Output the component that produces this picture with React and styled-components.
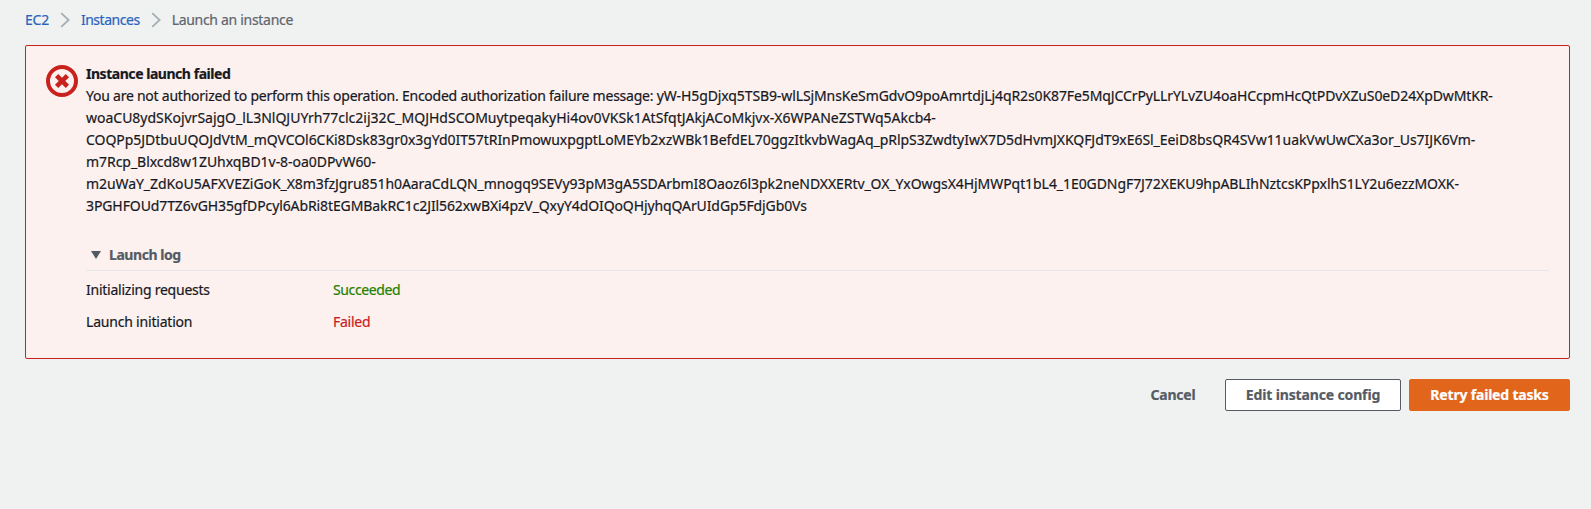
import React from "react";
import styled, { createGlobalStyle } from "styled-components";

const GlobalStyle = createGlobalStyle`
  * { box-sizing: border-box; }
  body {
    margin: 0;
    min-height: 100vh;
    background: #f0f2f2;
    color: #16191f;
    font-family: "Noto Sans", "Open Sans", sans-serif;
    font-size: 14px;
    line-height: 22px;
    white-space: nowrap;
    -webkit-text-stroke: 0.2px;
  }
`;

const Page = styled.main`
  padding: 9px 21px 0 25px;
`;

const Breadcrumbs = styled.nav`
  display: flex;
  align-items: center;
  height: 22px;
  margin-bottom: 14px;
`;

const Crumb = styled.a`
  color: ${(p) => (p.$current ? "#5f656d" : "#2a63bd")};
  letter-spacing: ${(p) => p.$tracking}px;
`;

const Chevron = styled.svg`
  flex: none;
  width: 10px;
  height: 16px;
  margin: 0 11px 0 11px;
  fill: none;
  stroke: #a3afb1;
  stroke-width: 1.8;
`;

const Alert = styled.section`
  display: flex;
  height: 314px;
  padding: 17px 20px 0;
  background: #fdf1ef;
  border: 1px solid #c9211e;
  border-radius: 2px;
`;

const ErrorIcon = styled.svg`
  flex: none;
  width: 32px;
  height: 32px;
  margin: 2px 8px 0 0;
  fill: none;
  stroke: #c9211e;
`;

const AlertBody = styled.div`
  flex: 1;
  min-width: 0;
`;

const AlertTitle = styled.h1`
  margin: 0;
  font-size: 14px;
  line-height: 22px;
  font-weight: 700;
  letter-spacing: -0.462px;
`;

const Message = styled.p`
  margin: 0;
`;

const Line = styled.span`
  display: block;
`;

const Run = styled.span`
  letter-spacing: ${(p) => p.$tracking}px;
`;

const LogHeader = styled.div`
  display: flex;
  align-items: center;
  height: 32px;
  margin-top: 22px;
  padding: 1px 0 0 5px;
  border-bottom: 1px solid #e3e9e9;
  color: #545b64;
  font-weight: 700;
  letter-spacing: -0.436px;
`;

const Caret = styled.svg`
  width: 10px;
  height: 8px;
  margin-right: 8px;
  fill: #545b64;
`;

const LogRows = styled.div`
  padding-top: 8px;
`;

const LogRow = styled.div`
  display: grid;
  grid-template-columns: 247px 1fr;
  height: 32px;
`;

const Status = styled(Run)`
  color: ${(p) => (p.$ok ? "#1d8102" : "#c9211e")};
`;

const Actions = styled.footer`
  display: flex;
  justify-content: flex-end;
  margin-top: 20px;
`;

const BUTTON_KINDS = {
  link: { bg: "transparent", border: "transparent", color: "#545b64" },
  normal: { bg: "#ffffff", border: "#545b64", color: "#545b64" },
  primary: { bg: "#e1651b", border: "#e1651b", color: "#ffffff" },
};

const Button = styled.button`
  width: ${(p) => p.$width}px;
  height: 32px;
  margin-left: 8px;
  padding: 0;
  border: 1px solid ${(p) => BUTTON_KINDS[p.$kind].border};
  border-radius: 2px;
  background: ${(p) => BUTTON_KINDS[p.$kind].bg};
  color: ${(p) => BUTTON_KINDS[p.$kind].color};
  font: 700 14px/20px "Noto Sans", "Open Sans", sans-serif;
  letter-spacing: ${(p) => p.$tracking}px;
`;

const Separator = () => (
  <Chevron viewBox="0 0 10 16" aria-hidden="true">
    <path d="M1.2 1.2 8.6 8 1.2 14.8" />
  </Chevron>
);

const MESSAGE = [
  [
    ["You are not authorized to perform this operation. Encoded authorization failure message: ", -0.24],
    ["yW-H5gDjxq5TSB9-wlLSjMnsKeSmGdvO9poAmrtdjLj4qR2s0K87Fe5MqJCCrPyLLrYLvZU4oaHCcpmHcQtPDvXZuS0eD24XpDwMtKR-", -0.105],
  ],
  [["woaCU8ydSKojvrSajgO_lL3NlQJUYrh77clc2ij32C_MQJHdSCOMuytpeqakyHi4ov0VKSk1AtSfqtJAkjACoMkjvx-X6WPANeZSTWq5Akcb4-", -0.008]],
  [["COQPp5JDtbuUQOJdVtM_mQVCOl6CKi8Dsk83gr0x3gYd0IT57tRInPmowuxpgptLoMEYb2xzWBk1BefdEL70ggzItkvbWagAq_pRlpS3ZwdtyIwX7D5dHvmJXKQFJdT9xE6Sl_EeiD8bsQR4SVw11uakVwUwCXa3or_Us7IJK6Vm-", -0.054]],
  [["m7Rcp_Blxcd8w1ZUhxqBD1v-8-oa0DPvW60-", -0.042]],
  [["m2uWaY_ZdKoU5AFXVEZiGoK_X8m3fzJgru851h0AaraCdLQN_mnogq9SEVy93pM3gA5SDArbmI8Oaoz6l3pk2neNDXXERtv_OX_YxOwgsX4HjMWPqt1bL4_1E0GDNgF7J72XEKU9hpABLIhNztcsKPpxlhS1LY2u6ezzMOXK-", -0.066]],
  [["3PGHFOUd7TZ6vGH35gfDPcyl6AbRi8tEGMBakRC1c2JIl562xwBXi4pzV_QxyY4dOIQoQHjyhqQArUIdGp5FdjGb0Vs", -0.103]],
];

const LOG = [
  { step: "Initializing requests", stepTracking: -0.242, status: "Succeeded", statusTracking: -0.376, ok: true },
  { step: "Launch initiation", stepTracking: -0.2, status: "Failed", statusTracking: -0.26, ok: false },
];

export default function App() {
  return (
    <>
      <GlobalStyle />
      <Page>
        <Breadcrumbs>
          <Crumb $tracking={-0.25}>EC2</Crumb>
          <Separator />
          <Crumb $tracking={-0.467}>Instances</Crumb>
          <Separator />
          <Crumb $current $tracking={-0.306}>Launch an instance</Crumb>
        </Breadcrumbs>
        <Alert>
          <ErrorIcon viewBox="0 0 32 32" aria-hidden="true">
            <circle cx="16" cy="16" r="14" strokeWidth="4" />
            <path d="M10.6 10.6 21.4 21.4M21.4 10.6 10.6 21.4" strokeWidth="4.6" />
          </ErrorIcon>
          <AlertBody>
            <AlertTitle>Instance launch failed</AlertTitle>
            <Message>
              {MESSAGE.map((runs, i) => (
                <Line key={i}>
                  {runs.map(([text, tracking]) => (
                    <Run key={text} $tracking={tracking}>{text}</Run>
                  ))}
                </Line>
              ))}
            </Message>
            <LogHeader>
              <Caret viewBox="0 0 10 8" aria-hidden="true">
                <path d="M0 0h10L5 8z" />
              </Caret>
              Launch log
            </LogHeader>
            <LogRows>
              {LOG.map((row) => (
                <LogRow key={row.step}>
                  <Run $tracking={row.stepTracking}>{row.step}</Run>
                  <Status $ok={row.ok} $tracking={row.statusTracking}>{row.status}</Status>
                </LogRow>
              ))}
            </LogRows>
          </AlertBody>
        </Alert>
        <Actions>
          <Button $kind="link" $width={88} $tracking={-0.239}>Cancel</Button>
          <Button $kind="normal" $width={176} $tracking={-0.145}>Edit instance config</Button>
          <Button $kind="primary" $width={161} $tracking={-0.19}>Retry failed tasks</Button>
        </Actions>
      </Page>
    </>
  );
}
